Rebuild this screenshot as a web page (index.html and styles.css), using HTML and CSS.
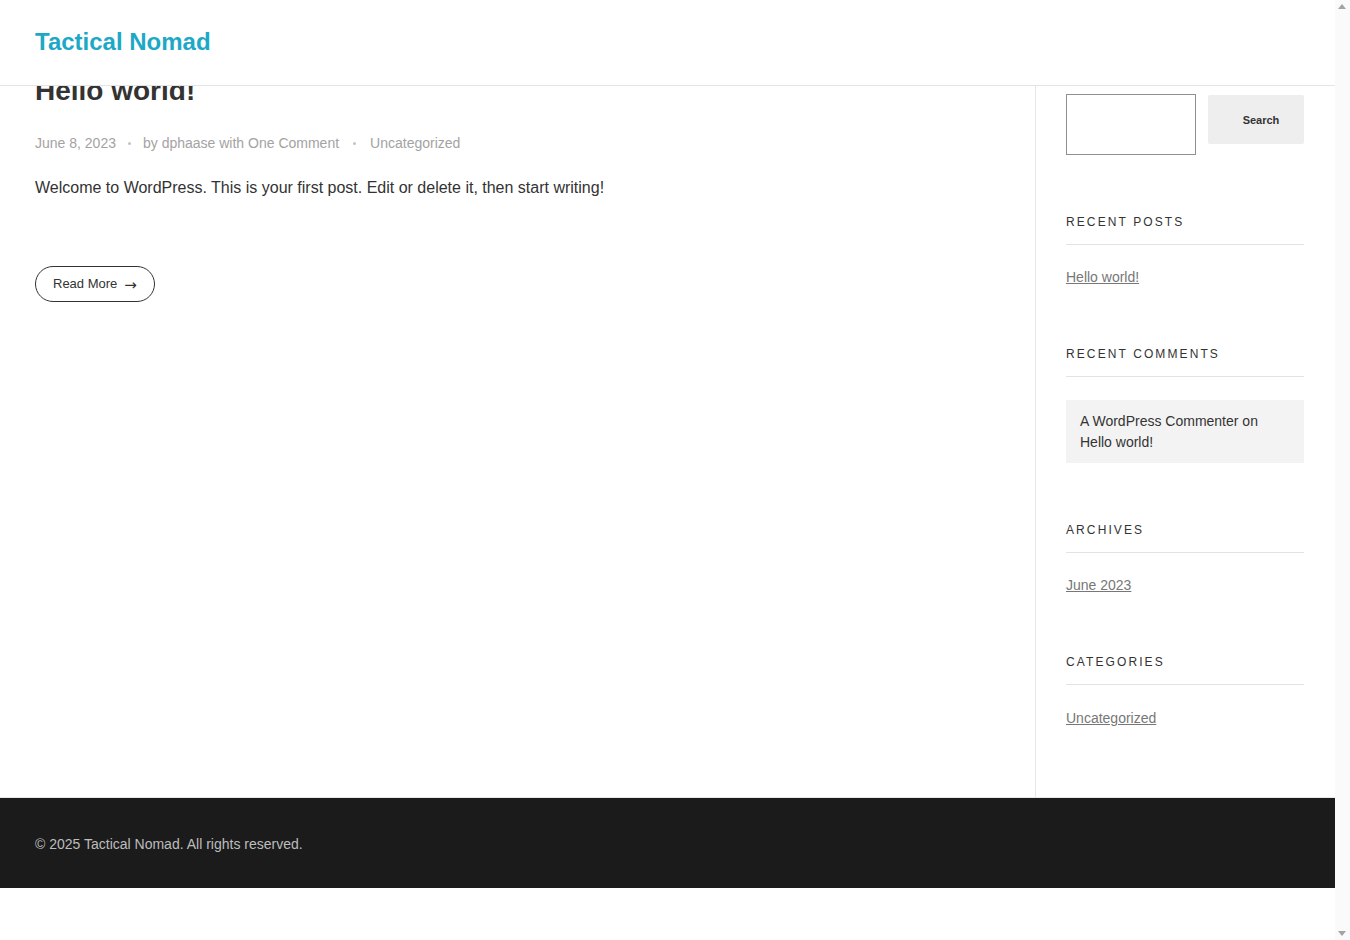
FILE: index.html
```html
<!DOCTYPE html>
<html lang="en">
<head>
<meta charset="utf-8">
<title>Tactical Nomad</title>
<link rel="stylesheet" href="styles.css">
</head>
<body>
<header class="site-header">
  <a class="logo" href="#">Tactical Nomad</a>
</header>

<div class="layout">
  <main class="content">
    <article class="post">
      <h1 class="post-title">Hello world!</h1>
      <div class="post-meta">
        <span>June 8, 2023</span>
        <span class="sep"></span>
        <span>by dphaase with One Comment</span>
        <span class="sep sep-wide"></span>
        <span>Uncategorized</span>
      </div>
      <p class="post-excerpt">Welcome to WordPress. This is your first post. Edit or delete it, then start writing!</p>
      <a class="read-more" href="#">Read More <span class="arrow">&rarr;</span></a>
    </article>
  </main>

  <aside class="sidebar">
    <form class="search">
      <input class="search-input" type="text" aria-label="Search">
      <button class="search-btn" type="button">Search</button>
    </form>

    <section class="widget">
      <h2 class="widget-title">Recent Posts</h2>
      <ul class="widget-list">
        <li><a href="#">Hello world!</a></li>
      </ul>
    </section>

    <section class="widget widget-comments">
      <h2 class="widget-title">Recent Comments</h2>
      <ul class="widget-list comments">
        <li>A WordPress Commenter on Hello world!</li>
      </ul>
    </section>

    <section class="widget">
      <h2 class="widget-title">Archives</h2>
      <ul class="widget-list">
        <li><a href="#">June 2023</a></li>
      </ul>
    </section>

    <section class="widget">
      <h2 class="widget-title">Categories</h2>
      <ul class="widget-list last-list">
        <li><a href="#">Uncategorized</a></li>
      </ul>
    </section>
  </aside>
</div>

<footer class="site-footer">
  <p>&copy; 2025 Tactical Nomad. All rights reserved.</p>
</footer>
<div class="page-end"></div>

<div class="scrollbar" aria-hidden="true">
  <span class="scroll-arrow up"></span>
  <span class="scroll-arrow down"></span>
</div>
</body>
</html>
```

FILE: styles.css
```css
* { box-sizing: border-box; }

html, body {
  padding: 0;
  background: #ffffff;
}

html { margin: 0; }

body {
  margin: 0 15px 0 0;
  font-family: "Liberation Sans", Arial, sans-serif;
  color: #333333;
}

.site-header {
  position: fixed;
  top: 0;
  left: 0;
  right: 15px;
  height: 86px;
  padding: 28px 35px 0;
  background: #ffffff;
  border-bottom: 1px solid #e4e4e4;
  z-index: 10;
}

.logo {
  font-size: 24px;
  font-weight: 700;
  line-height: 1.2;
  color: #1ca8c6;
  text-decoration: none;
}

.layout {
  display: grid;
  grid-template-columns: 1fr 300px;
  border-bottom: 1px solid #e8e8e8;
}

.content {
  padding: 74px 30px 40px 35px;
}

.post-title {
  margin: 0;
  font-size: 28px;
  line-height: 1.2;
  font-weight: 700;
  color: #333333;
}

.post-meta {
  margin-top: 25px;
  display: flex;
  align-items: center;
  font-size: 14px;
  line-height: 21px;
  color: #a3a3a3;
}

.sep {
  width: 3px;
  height: 3px;
  margin: 1px 12px 0 12px;
  border-radius: 50%;
  background: #c4c4c4;
}

.sep-wide {
  margin-left: 14px;
  margin-right: 14px;
}

.post-excerpt {
  margin: 22px 0 0;
  font-size: 16px;
  line-height: 24px;
  color: #333333;
}

.read-more {
  display: inline-flex;
  align-items: center;
  margin-top: 66px;
  height: 36px;
  padding: 0 17px 0 17px;
  border: 1px solid #333333;
  border-radius: 18px;
  font-size: 13px;
  line-height: 20px;
  color: #333333;
  text-decoration: none;
}

.arrow {
  margin-left: 7px;
  font-family: "Noto Sans", "DejaVu Sans", sans-serif;
  font-size: 15px;
  line-height: 20px;
}

.sidebar {
  border-left: 1px solid #e6e6e6;
  padding: 94px 31px 68px 30px;
}

.search {
  display: flex;
  align-items: flex-start;
  gap: 12px;
  margin: 0 0 58px;
}

.search-input {
  width: 130px;
  height: 61px;
  margin: 0;
  border: 1px solid #8f8f8f;
  background: #ffffff;
  font-family: inherit;
}

.search-btn {
  width: 96px;
  height: 49px;
  margin: 1px 0 0;
  padding: 0 0 0 10px;
  border: none;
  border-radius: 2px;
  background: #eeeeee;
  font-family: inherit;
  font-size: 11px;
  font-weight: 700;
  color: #333333;
}

.widget {
  margin-bottom: 57px;
}

.widget-comments {
  margin-bottom: 58px;
}

.widget:last-child {
  margin-bottom: 0;
}

.widget-title {
  margin: 0;
  padding-bottom: 13px;
  border-bottom: 1px solid #e3e3e3;
  font-size: 12px;
  line-height: 18px;
  font-weight: 400;
  letter-spacing: 2.1px;
  text-transform: uppercase;
  color: #333333;
}

.widget-list {
  list-style: none;
  margin: 22px 0 0;
  padding: 0;
  font-size: 14px;
  line-height: 21px;
}

.widget-list.last-list {
  margin-top: 23px;
}

.widget-list a {
  color: #777777;
  text-decoration: underline;
}

.widget-list.comments {
  margin-top: 23px;
}

.widget-list.comments li {
  padding: 10.5px 14px;
  background: #f3f3f3;
  color: #333333;
}

.site-footer {
  background: #1b1b1b;
  height: 90px;
  padding: 36px 35px 0;
}

.site-footer p {
  margin: 0;
  font-size: 14px;
  line-height: 20px;
  color: #bdbdbd;
}

.page-end {
  height: 120px;
}

.scrollbar {
  position: fixed;
  top: 0;
  right: 0;
  bottom: 0;
  width: 15px;
  background: #fafafa;
  z-index: 20;
}

.scroll-arrow {
  position: absolute;
  left: 3px;
  width: 0;
  height: 0;
  border-left: 4.5px solid transparent;
  border-right: 4.5px solid transparent;
}

.scroll-arrow.up {
  top: 4px;
  border-bottom: 5px solid #a3a3a3;
}

.scroll-arrow.down {
  bottom: 4px;
  border-top: 5px solid #a3a3a3;
}
```
